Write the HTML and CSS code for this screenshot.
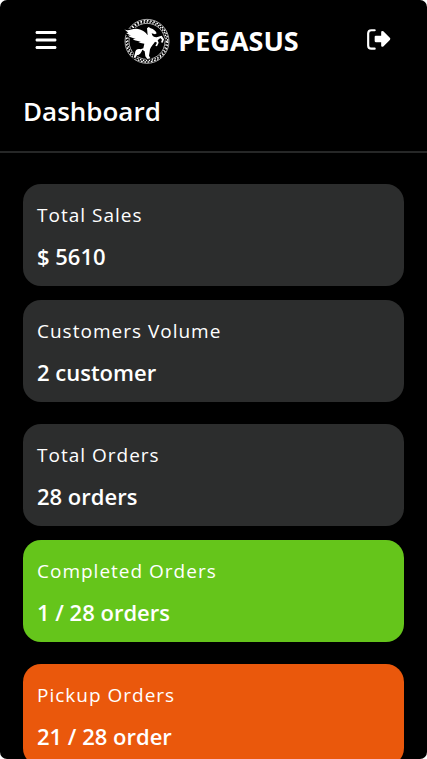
FILE: index.html
```html
<!DOCTYPE html>
<html lang="en">
<head>
<meta charset="utf-8">
<meta name="viewport" content="width=device-width, initial-scale=1">
<title>Pegasus Dashboard</title>
<link rel="stylesheet" href="styles.css">
</head>
<body>
<div class="app">
  <header class="topbar">
    <button class="icon-button" type="button" aria-label="Menu">
      <svg class="icon menu-icon" viewBox="0 0 448 512" aria-hidden="true"><path d="M0 96c0-18 14-32 32-32h384c18 0 32 14 32 32s-14 32-32 32H32c-18 0-32-14-32-32zm0 160c0-18 14-32 32-32h384c18 0 32 14 32 32s-14 32-32 32H32c-18 0-32-14-32-32zm448 160c0 18-14 32-32 32H32c-18 0-32-14-32-32s14-32 32-32h384c18 0 32 14 32 32z"/></svg>
    </button>
    <a class="brand" href="#">
      <svg class="logo" viewBox="30 24 138 138" aria-hidden="true">
        <g fill="none" stroke="#fff">
          <circle cx="99" cy="94" r="66" stroke-width="2"/>
          <circle cx="99" cy="94" r="62" stroke-width="4" stroke-dasharray="5 5"/>
          <circle cx="99" cy="94" r="58" stroke-width="4" stroke-dasharray="4 5"/>
          <circle cx="99" cy="94" r="54" stroke-width="2"/>
        </g>
        <path fill="#fff" stroke="#000" stroke-width="6" paint-order="stroke" d="M31 58C43 65 51 56 66 56C83 57 96 66 101 76L99 55L104 51L110 55C119 57 125 63 128 70L123 73L113 70C114 78 119 82 128 82L143 77L150 88L146 98L141 97L144 89L139 84L131 91L134 98L129 109L124 107L129 98L123 95C119 103 111 108 108 118L105 137L109 145L100 147L94 139L92 124L85 119C82 127 78 135 69 135L65 143H59L63 130C63 119 72 115 79 118L88 115L91 101L80 99L73 96L81 95L62 91L56 87L65 87L46 80L42 76L51 77L36 69L43 68z"/>
      </svg>
      <span class="brand-name">PEGASUS</span>
    </a>
    <button class="icon-button" type="button" aria-label="Log out">
      <svg class="icon logout-icon" viewBox="0 0 24 22" aria-hidden="true"><path d="M8 2H5Q2 2 2 5V16Q2 19 5 19H8" fill="none" stroke="#fff" stroke-width="2" stroke-linecap="round"/><path d="M9 7H14V4Q14 2 16 3L22 9Q23 10 22 11L16 17Q14 18 14 16V13H9Q8 13 8 12V8Q8 7 9 7z"/></svg>
    </button>
  </header>
  <h1 class="page-title">Dashboard</h1>
  <main class="content">
    <section class="group">
      <article class="card"><h2 class="label">Total Sales</h2><p class="value">$ 5610</p></article>
      <article class="card"><h2 class="label">Customers Volume</h2><p class="value">2 customer</p></article>
    </section>
    <section class="group">
      <article class="card"><h2 class="label">Total Orders</h2><p class="value">28 orders</p></article>
      <article class="card completed"><h2 class="label">Completed Orders</h2><p class="value">1 / 28 orders</p></article>
    </section>
    <section class="group">
      <article class="card pickup"><h2 class="label">Pickup Orders</h2><p class="value">21 / 28 order</p></article>
    </section>
  </main>
</div>
</body>
</html>
```
FILE: styles.css
```css
* { box-sizing: border-box; }
body {
  margin: 0;
  background: #fff;
  color: #fff;
  font-family: "Segoe UI", "Open Sans", "Noto Sans", sans-serif;
}
h1, h2, p { margin: 0; }
.app {
  display: flex;
  flex-direction: column;
  height: 100vh;
  overflow: hidden;
  border-radius: 7px;
  background: #000;
}
.topbar {
  display: flex;
  flex: none;
  align-items: center;
  justify-content: space-between;
  padding: 18px 35px 8px;
}
.icon-button {
  display: flex;
  padding: 0 0 2px;
  border: 0;
  background: none;
  color: inherit;
  cursor: pointer;
}
.icon { display: block; fill: currentColor; }
.menu-icon { width: 22px; height: 24px; }
.logout-icon { width: 26px; height: 24px; }
.brand {
  display: flex;
  align-items: center;
  gap: 8px;
  color: inherit;
  text-decoration: none;
}
.logo { width: 46px; height: 46px; }
.brand-name { font-size: 27px; line-height: 32px; font-weight: 700; }
.page-title {
  flex: none;
  padding: 20px 23px;
  border-bottom: 2px solid #262727;
  font-size: 26px;
  line-height: 39px;
  font-weight: 600;
}
.content {
  display: flex;
  flex: 1;
  flex-direction: column;
  gap: 22px;
  min-height: 0;
  padding: 31px 23px;
  overflow-y: auto;
  scrollbar-width: none;
}
.group { display: flex; flex: none; flex-direction: column; gap: 14px; }
.card {
  padding: 16px 14px 14px;
  border-radius: 18px;
  background: #2c2d2d;
}
.completed { background: #65c51b; }
.pickup { background: #ea580c; }
.label {
  font-size: 19px;
  line-height: 30px;
  font-weight: 400;
  letter-spacing: 1px;
}
.value {
  margin-top: 10px;
  font-size: 22px;
  line-height: 32px;
  font-weight: 600;
}
```
